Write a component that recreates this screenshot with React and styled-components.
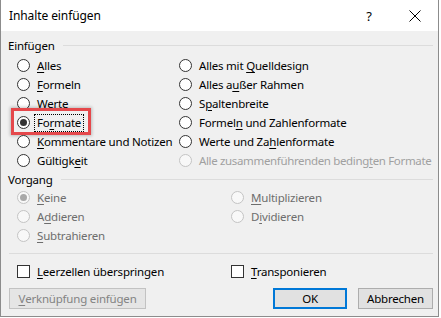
import React from "react";
import styled, { createGlobalStyle } from "styled-components";

const GlobalStyle = createGlobalStyle`
  html, body {
    margin: 0;
    padding: 0;
    background: #ffffff;
  }
  body {
    font-family: "Noto Sans", "Segoe UI", Arial, sans-serif;
    font-size: 11.5px;
    letter-spacing: -0.2px;
    color: #000;
  }
`;

const Dialog = styled.div`
  width: 439px;
  height: 317px;
  box-sizing: border-box;
  background: #f0f0f0;
  border: 1px solid #8c8c8c;
  border-top: none;
  display: flex;
  flex-direction: column;
`;

const TitleBar = styled.div`
  height: 31px;
  background: #fff;
  display: flex;
  align-items: center;
  padding-left: 8px;
`;

const Title = styled.div`
  flex: 1;
  font-size: 12px;
  letter-spacing: -0.1px;
  padding-bottom: 1px;
`;

const TitleButton = styled.div`
  width: 46px;
  height: 31px;
  display: flex;
  align-items: center;
  justify-content: center;
  font-size: 13px;
`;

const Body = styled.div`
  flex: 1;
  display: flex;
  flex-direction: column;
  padding: 0 5px 0 7px;
`;

const GroupHeader = styled.div`
  height: 18px;
  margin-top: ${(p) => p.$top || 0}px;
  display: flex;
  align-items: center;
  gap: 8px;
  &::after {
    content: "";
    flex: 1;
    height: 1px;
    background: #dcdcdc;
  }
`;

const OptionGrid = styled.div`
  display: grid;
  grid-template-columns: ${(p) => p.$first}px 1fr;
  grid-auto-rows: 19px;
  padding-left: 9px;
  margin-top: ${(p) => p.$top || 0}px;
`;

const Option = styled.div`
  position: relative;
  display: flex;
  align-items: center;
  height: 19px;
  grid-column: ${(p) => p.$col || "auto"};
  grid-row: ${(p) => p.$row || "auto"};
  color: ${(p) => (p.$muted ? "#6d6d6d" : p.$disabled ? "#a0a0a0" : "#000")};
  letter-spacing: ${(p) => (p.$disabled ? "-0.35px" : "inherit")};
`;

const Radio = styled.span`
  flex: none;
  width: 13px;
  height: 13px;
  box-sizing: border-box;
  border-radius: 50%;
  border: 1px solid ${(p) => (p.$light ? "#c4c4c4" : "#333")};
  background: ${(p) => (p.$light ? "#f8f8f8" : "#fff")};
  display: flex;
  align-items: center;
  justify-content: center;
  &::after {
    content: "";
    display: ${(p) => (p.$checked ? "block" : "none")};
    width: 7px;
    height: 7px;
    border-radius: 50%;
    background: ${(p) => (p.$light ? "#a8a8a8" : "#333")};
  }
`;

const Check = styled.span`
  flex: none;
  width: 13px;
  height: 13px;
  box-sizing: border-box;
  border: 1px solid #333;
  background: #fff;
`;

const Label = styled.span`
  margin-left: ${(p) => (p.$focus ? 5 : 7)}px;
  padding: 0 ${(p) => (p.$focus ? 2 : 0)}px;
  line-height: 16px;
  white-space: nowrap;
  outline: ${(p) => (p.$focus ? "1px dotted #000" : "none")};
  outline-offset: 0;
  u {
    text-underline-offset: 2px;
    text-decoration-thickness: 1px;
  }
`;

const Highlight = styled.div`
  position: absolute;
  left: -6px;
  top: -5px;
  width: 80px;
  height: 27px;
  box-sizing: border-box;
  border: 3px solid #e5484b;
  box-shadow: 0 0 3px 1px rgba(0, 0, 0, 0.22);
  pointer-events: none;
`;

const Separator = styled.div`
  height: 1px;
  background: #dcdcdc;
  margin-top: 8px;
  margin-left: 1px;
`;

const CheckRow = styled.div`
  display: grid;
  grid-template-columns: 214px 1fr;
  padding-left: 9px;
  margin-top: 8px;
`;

const ButtonRow = styled.div`
  display: flex;
  align-items: center;
  margin-top: 7px;
  padding-left: 1px;
  gap: 11px;
`;

const Button = styled.div`
  height: 21px;
  width: ${(p) => p.$width}px;
  box-sizing: border-box;
  display: flex;
  align-items: center;
  justify-content: center;
  background: ${(p) => (p.$disabled ? "#e5e5e5" : "#e1e1e1")};
  border: ${(p) =>
    p.$default ? "2px solid #0078d7" : `1px solid ${p.$disabled ? "#c2c2c2" : "#adadad"}`};
  color: ${(p) => (p.$disabled ? "#838383" : "#000")};
  margin-left: ${(p) => (p.$push ? "auto" : "0")};
  u {
    text-underline-offset: 2px;
  }
`;

const Key = ({ text, k }) => {
  if (k == null) return text;
  return (
    <>
      {text.slice(0, k)}
      <u>{text[k]}</u>
      {text.slice(k + 1)}
    </>
  );
};

const pasteLeft = [
  ["Alles", 0],
  ["Formeln", 0],
  ["Werte", null],
  ["Formate", 2],
  ["Kommentare und Notizen", 0],
  ["Gültigkeit", 7],
];

const pasteRight = [
  ["Alles mit Quelldesign", 10],
  ["Alles außer Rahmen", 7],
  ["Spaltenbreite", 1],
  ["Formeln und Zahlenformate", 6],
  ["Werte und Zahlenformate", 12],
  ["Alle zusammenführenden bedingten Formate", 29, true],
];

const CloseIcon = () => (
  <svg width="12" height="12" viewBox="0 0 12 12">
    <path d="M0.5 0.5 L11.5 11.5 M11.5 0.5 L0.5 11.5" stroke="#000" strokeWidth="1" fill="none" />
  </svg>
);

export default function App() {
  return (
    <>
      <GlobalStyle />
      <Dialog>
        <TitleBar>
          <Title>Inhalte einfügen</Title>
          <TitleButton>?</TitleButton>
          <TitleButton>
            <CloseIcon />
          </TitleButton>
        </TitleBar>
        <Body>
          <GroupHeader $top={5}>Einfügen</GroupHeader>
          <OptionGrid $first={162} $top={2}>
            {pasteLeft.map(([t, k], i) => (
              <Option key={t} $col={1} $row={i + 1}>
                <Radio $checked={t === "Formate"} />
                <Label $focus={t === "Formate"}>
                  <Key text={t} k={k} />
                </Label>
                {t === "Formate" && <Highlight />}
              </Option>
            ))}
            {pasteRight.map(([t, k, dis], i) => (
              <Option key={t} $col={2} $row={i + 1} $disabled={dis}>
                <Radio $light={dis} />
                <Label>
                  <Key text={t} k={k} />
                </Label>
              </Option>
            ))}
          </OptionGrid>
          <GroupHeader>Vorgang</GroupHeader>
          <OptionGrid $first={214}>
            <Option $col={1} $row={1} $muted>
              <Radio $light $checked />
              <Label><Key text="Keine" k={0} /></Label>
            </Option>
            <Option $col={1} $row={2} $muted>
              <Radio $light />
              <Label><Key text="Addieren" k={1} /></Label>
            </Option>
            <Option $col={1} $row={3} $muted>
              <Radio $light />
              <Label><Key text="Subtrahieren" k={0} /></Label>
            </Option>
            <Option $col={2} $row={1} $muted>
              <Radio $light />
              <Label><Key text="Multiplizieren" k={0} /></Label>
            </Option>
            <Option $col={2} $row={2} $muted>
              <Radio $light />
              <Label><Key text="Dividieren" k={1} /></Label>
            </Option>
          </OptionGrid>
          <Separator />
          <CheckRow>
            <Option>
              <Check />
              <Label><Key text="Leerzellen überspringen" k={0} /></Label>
            </Option>
            <Option>
              <Check />
              <Label><Key text="Transponieren" k={0} /></Label>
            </Option>
          </CheckRow>
          <ButtonRow>
            <Button $width={137} $disabled>
              <Key text="Verknüpfung einfügen" k={0} />
            </Button>
            <Button $width={74} $default $push>OK</Button>
            <Button $width={75}>Abbrechen</Button>
          </ButtonRow>
        </Body>
      </Dialog>
    </>
  );
}
